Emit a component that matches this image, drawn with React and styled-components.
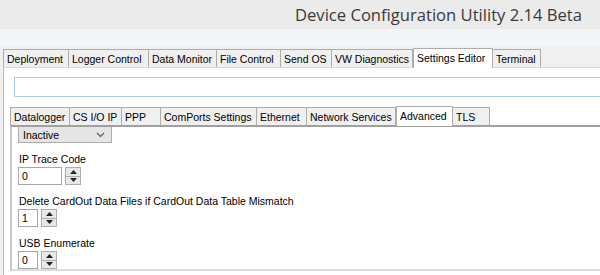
import React from "react";
import styled, { createGlobalStyle } from "styled-components";

const Global = createGlobalStyle`
  html, body { margin: 0; padding: 0; background: #ffffff; }
  body { width: 600px; height: 275px; overflow: hidden; font-family: "Liberation Sans", Arial, sans-serif; }
  * { box-sizing: border-box; }
`;

const Page = styled.div`
  width: 600px;
  height: 275px;
  display: flex;
  flex-direction: column;
  background: #f0f0f0;
  overflow: hidden;
`;

const TitleBar = styled.div`
  height: 30px;
  background: #ebebeb;
  display: flex;
  align-items: center;
  justify-content: flex-end;
  padding-right: 18px;
  font-family: "Open Sans", "Noto Sans", sans-serif;
  font-size: 16.6px;
  color: #3a3a3a;
`;

const Band = styled.div`
  height: 18px;
  background: #f4f5f7;
`;

const TabStrip = styled.div`
  display: flex;
  align-items: flex-end;
  height: ${p => p.$h}px;
  padding-left: ${p => p.$pl}px;
  background: ${p => p.$bg};
  font-size: 10.5px;
  color: #000;
`;

const Tab = styled.div`
  height: ${p => (p.$active ? 20 : 18)}px;
  width: ${p => p.$w}px;
  display: flex;
  align-items: center;
  padding-left: 3px;
  white-space: nowrap;
  overflow: hidden;
  background: ${p => (p.$active ? "#ffffff" : "#f0f0f0")};
  border: 1px solid #adadad;
  border-bottom: none;
  border-left: ${p => (p.$first || p.$active ? "1px solid #adadad" : "none")};
  margin-bottom: ${p => (p.$active ? "-1px" : "0")};
  position: relative;
  z-index: ${p => (p.$active ? 1 : 0)};
  padding-bottom: ${p => (p.$active ? 2 : 0)}px;
`;

const Panel = styled.div`
  flex: 1;
  margin-left: 3px;
  background: #ffffff;
  border-left: 1px solid #b9b9b9;
  border-top: 1px solid #d9d9d9;
  display: flex;
  flex-direction: column;
  padding-top: 9px;
  padding-left: 10px;
`;

const SearchBox = styled.div`
  height: 20px;
  margin-right: -20px;
  border: 1px solid #a9cdee;
  background: #ffffff;
`;

const InnerArea = styled.div`
  margin-top: 9px;
  margin-left: -4px;
  display: flex;
  flex-direction: column;
  flex: 1;
`;

const InnerPanel = styled.div`
  flex: 1;
  background: #ffffff;
  border-top: 2px solid #a0a0a0;
  border-left: 2px solid #c8c8c8;
  border-bottom: 2px solid #dcdcdc;
  margin-bottom: 4px;
  margin-right: -10px;
  padding-left: 6px;
  display: flex;
  flex-direction: column;
  font-size: 10.5px;
  color: #000;
`;

const Select = styled.div`
  width: 94px;
  height: 16px;
  background: #e5e5e5;
  border: 1px solid #adadad;
  border-top: none;
  display: flex;
  align-items: center;
  justify-content: space-between;
  padding: 0 6px 0 4px;
`;

const Field = styled.div`
  display: flex;
  flex-direction: column;
  margin-top: ${p => p.$mt}px;
`;

const Label = styled.div`
  height: 14px;
  line-height: 14px;
  margin-bottom: 1px;
  padding-left: 1px;
`;

const SpinRow = styled.div`
  display: flex;
  gap: 3px;
`;

const SpinInput = styled.div`
  width: ${p => p.$w}px;
  height: 18px;
  border: 1px solid #a8a8a8;
  display: flex;
  align-items: center;
  padding-left: 3px;
`;

const Spinner = styled.div`
  width: 16px;
  height: 18px;
  display: flex;
  flex-direction: column;
  border: 1px solid #adadad;
  background: #e8e8e8;
`;

const SpinHalf = styled.div`
  flex: 1;
  display: flex;
  align-items: center;
  justify-content: center;
  border-top: ${p => (p.$bottom ? "1px solid #adadad" : "none")};
`;

const Chevron = () => (
  <svg width="9" height="6" viewBox="0 0 9 6">
    <path d="M1 1 L4.5 4.5 L8 1" stroke="#555" strokeWidth="1.1" fill="none" />
  </svg>
);

const Arrow = ({ down }) => (
  <svg width="7" height="4" viewBox="0 0 7 4">
    {down ? <path d="M0 0 H7 L3.5 4 Z" fill="#222" /> : <path d="M0 4 H7 L3.5 0 Z" fill="#222" />}
  </svg>
);

const SpinBox = ({ value, w }) => (
  <SpinRow>
    <SpinInput $w={w}>{value}</SpinInput>
    <Spinner>
      <SpinHalf><Arrow /></SpinHalf>
      <SpinHalf $bottom><Arrow down /></SpinHalf>
    </Spinner>
  </SpinRow>
);

const mainTabs = [
  ["Deployment", 66],
  ["Logger Control", 80],
  ["Data Monitor", 68],
  ["File Control", 64],
  ["Send OS", 51],
  ["VW Diagnostics", 81],
  ["Settings Editor", 80, true],
  ["Terminal", 48],
];

const subTabs = [
  ["Datalogger", 60],
  ["CS I/O IP", 52],
  ["PPP", 39],
  ["ComPorts Settings", 96],
  ["Ethernet", 50],
  ["Network Services", 89],
  ["Advanced", 57, true],
  ["TLS", 37],
];

export default function App() {
  return (
    <Page>
      <Global />
      <TitleBar>Device Configuration Utility 2.14 Beta</TitleBar>
      <Band />
      <TabStrip $h={21} $pl={3} $bg="#f0f0f0">
        {mainTabs.map(([t, w, a], i) => (
          <Tab key={t} $w={w} $active={a} $first={i === 0}>{t}</Tab>
        ))}
      </TabStrip>
      <Panel>
        <SearchBox />
        <InnerArea>
          <TabStrip $h={19} $pl={0} $bg="#ffffff">
            {subTabs.map(([t, w, a], i) => (
              <Tab key={t} $w={w} $active={a} $first={i === 0}>{t}</Tab>
            ))}
          </TabStrip>
          <InnerPanel>
            <Select>
              <span>Inactive</span>
              <Chevron />
            </Select>
            <Field $mt={9}>
              <Label>IP Trace Code</Label>
              <SpinBox value="0" w={44} />
            </Field>
            <Field $mt={9}>
              <Label>Delete CardOut Data Files if CardOut Data Table Mismatch</Label>
              <SpinBox value="1" w={20} />
            </Field>
            <Field $mt={9}>
              <Label>USB Enumerate</Label>
              <SpinBox value="0" w={20} />
            </Field>
          </InnerPanel>
        </InnerArea>
      </Panel>
    </Page>
  );
}
